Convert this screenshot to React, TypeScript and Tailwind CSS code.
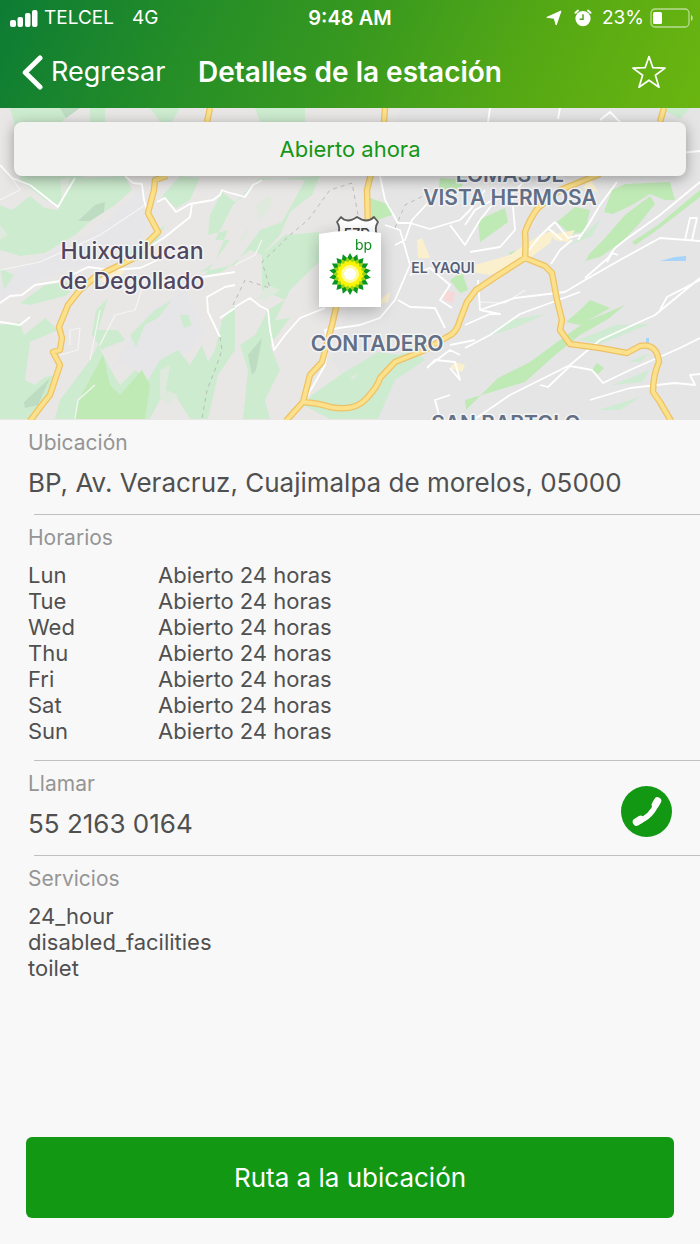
import { useState } from "react";

const HOURS = [
	{ day: "Lun", text: "Abierto 24 horas" },
	{ day: "Tue", text: "Abierto 24 horas" },
	{ day: "Wed", text: "Abierto 24 horas" },
	{ day: "Thu", text: "Abierto 24 horas" },
	{ day: "Fri", text: "Abierto 24 horas" },
	{ day: "Sat", text: "Abierto 24 horas" },
	{ day: "Sun", text: "Abierto 24 horas" },
];

const SERVICES = ["24_hour", "disabled_facilities", "toilet"];

export default function App() {
	return (
		<div className="flex min-h-screen flex-col bg-[#f8f8f8] font-['Inter','Liberation_Sans',sans-serif] text-[#505050]">
			<header className="bg-linear-[115deg,#0d7c34_0%,#258e27_28%,#38991f_50%,#56a914_75%,#6ab510_100%] text-white">
				<StatusBar />
				<NavBar />
			</header>

			<section className="relative flex h-[312px] flex-col items-center overflow-hidden px-3.5 pt-3.5">
				<StationMap />
				<p className="relative h-[54px] w-full rounded-lg bg-[#f2f2f1] text-center text-[22px] leading-[54px] text-[#159615] shadow-[0_3px_14px_rgba(0,0,0,0.35)]">
					Abierto ahora
				</p>
				<StationMarker />
			</section>

			<main>
				<section className="px-7 pt-[9px] pb-[15px]">
					<SectionTitle>Ubicación</SectionTitle>
					<p className="mt-2.5 text-[26px] leading-8">
						BP, Av. Veracruz, Cuajimalpa de morelos, 05000
					</p>
				</section>
				<Divider />

				<section className="px-7 pt-[9px] pb-4">
					<SectionTitle>Horarios</SectionTitle>
					<table className="mt-2.5 text-left text-[22px] leading-[26px]">
						<tbody>
							{HOURS.map((h) => (
								<tr key={h.day}>
									<th scope="row" className="w-[130px] p-0 font-normal">
										{h.day}
									</th>
									<td className="p-0">{h.text}</td>
								</tr>
							))}
						</tbody>
					</table>
				</section>
				<Divider />

				<section className="flex items-end justify-between px-7">
					<div className="pt-[9px] pb-[15px]">
						<SectionTitle>Llamar</SectionTitle>
						<p className="mt-2.5 text-[26px] leading-8">55 2163 0164</p>
					</div>
					<button
						type="button"
						aria-label="Llamar a la estación"
						className="mb-[18px] size-[51px] rounded-full bg-[#129812]"
					>
						<PhoneIcon />
					</button>
				</section>
				<Divider />

				<section className="px-7 pt-[9px] pb-4">
					<SectionTitle>Servicios</SectionTitle>
					<ul className="mt-2.5 text-[22px] leading-[26px]">
						{SERVICES.map((s) => (
							<li key={s}>{s}</li>
						))}
					</ul>
				</section>
			</main>

			<footer className="mt-auto px-[26px] pb-[26px]">
				<button
					type="button"
					className="h-[81px] w-full rounded-md bg-[#129812] text-[26px] text-white"
				>
					Ruta a la ubicación
				</button>
			</footer>
		</div>
	);
}

function SectionTitle({ children }: { children: React.ReactNode }) {
	return <h2 className="text-[21px] leading-7 text-[#959595]">{children}</h2>;
}

function Divider() {
	return <hr className="ml-[34px] border-[#c0c0c0]" />;
}

// ── Header ─────────────────────────────────────────────────────────────────

function StatusBar() {
	return (
		<div className="grid h-9 grid-cols-[1fr_auto_1fr] items-center px-2.5 text-[19px]">
			<div className="flex items-center gap-1.5">
				<svg width="28" height="18" viewBox="0 0 28 18" fill="#fff" aria-hidden="true">
					<rect x="0" y="11" width="6" height="7" rx="2" />
					<rect x="7.5" y="8" width="5.5" height="10" rx="2" />
					<rect x="15" y="4" width="5.5" height="14" rx="2" />
					<rect x="22" y="1" width="5.5" height="17" rx="2" />
				</svg>
				<span>TELCEL</span>
				<span className="ml-3">4G</span>
			</div>
			<span className="px-2 text-[20px] font-semibold">9:48 AM</span>
			<div className="flex items-center justify-end">
				<svg width="16" height="16" viewBox="0 0 16 16" fill="#fff" aria-hidden="true">
					<path d="M15 1 10.200 15 8.200 8.200.8 7.400Z" stroke="#fff" strokeLinejoin="round" />
				</svg>
				<svg
					width="18"
					height="18"
					viewBox="0 0 18 18"
					className="ml-3"
					fill="none"
					aria-hidden="true"
				>
					<circle cx="9" cy="9.6" r="7.6" fill="#fff" />
					<path d="M1.500 3.800 4 1.600M16.500 3.800 14 1.600" stroke="#fff" strokeWidth="2" strokeLinecap="round" />
					<path d="M9 5.2v5H5.6" stroke="#4fa51a" strokeWidth="1.5" />
				</svg>
				<span className="ml-2.5">23%</span>
				<svg
					width="44"
					height="20"
					viewBox="0 0 44 20"
					className="-mr-1 ml-1.5"
					fill="none"
					aria-hidden="true"
				>
					<rect x="1" y="1" width="38" height="18" rx="4" stroke="#fff" strokeOpacity=".55" strokeWidth="1.3" />
					<rect x="3" y="4" width="9" height="12" rx="1.5" fill="#fff" />
					<path d="M41 7c2.4 1 2.4 5 0 6Z" fill="#fff" fillOpacity=".6" />
				</svg>
			</div>
		</div>
	);
}

function NavBar() {
	const [favorite, setFavorite] = useState(false);

	return (
		<nav className="grid h-[72px] grid-cols-[1fr_auto_1fr] items-center px-[22px]">
			<a href="#estaciones" className="flex items-center gap-2 text-[27px]">
				<svg width="21" height="35" viewBox="0 0 21 35" fill="none" aria-hidden="true">
					<path
						d="M18 3 3.2 17.5 18 32"
						stroke="#fff"
						strokeWidth="5"
						strokeLinecap="round"
						strokeLinejoin="round"
					/>
				</svg>
				Regresar
			</a>
			<h1 className="text-[28px] font-semibold">Detalles de la estación</h1>
			<button
				type="button"
				aria-label="Favorito"
				aria-pressed={favorite}
				onClick={() => setFavorite(!favorite)}
				className="mr-3 justify-self-end"
			>
				<svg width="34" height="34" viewBox="0 0 34 34" aria-hidden="true">
					<path
						d="M17 1.5 20.9 12.7 33 13.1 23.4 20.3 27 32.2 17 25.2 7 32.2 10.6 20.3 1 13.1 13.1 12.7Z"
						fill={favorite ? "#fff" : "none"}
						stroke="#fff"
						strokeWidth="1.7"
						strokeLinejoin="round"
					/>
				</svg>
			</button>
		</nav>
	);
}

function PhoneIcon() {
	return (
		<svg viewBox="0 0 51 51" fill="none" strokeLinecap="round" aria-hidden="true">
			<path d="M16 36Q31 31 36 16" stroke="#fff" strokeWidth="5.500" />
			<path d="M15.500 36 19.500 33.500M36.500 15 34.500 18.500" stroke="#fff" strokeWidth="7.500" />
		</svg>
	);
}

// ── Map ────────────────────────────────────────────────────────────────────

// Three rings of petals, drawn from the outside in.
const PETAL_RINGS = [
	{ color: "#0a9420", outer: 21, inner: 13, turn: 0 },
	{ color: "#9bd616", outer: 17, inner: 10, turn: 10 },
	{ color: "#fdf304", outer: 14, inner: 8, turn: 0 },
];

const PETALS = Array.from({ length: 18 }, (_, i) => i * 20);

function StationMarker() {
	return (
		<svg
			width="62"
			height="76"
			viewBox="0 0 62 76"
			className="relative mt-[55px] overflow-visible drop-shadow-[0_4px_8px_rgba(0,0,0,0.25)]"
			role="img"
			aria-label="bp"
		>
			<path d="M0 3Q30-3 62 2V76H0Z" fill="#fff" />
			<text x="36" y="19" fontSize="14" fill="#0a8a1c">
				bp
			</text>
			<g transform="translate(31 43)">
				{PETAL_RINGS.map((ring) => (
					<g key={ring.color} fill={ring.color}>
						{PETALS.map((angle) => (
							<path
								key={angle}
								d={`M0 0 -3.400 ${-ring.inner - 2} 0 ${-ring.outer} 3.400 ${-ring.inner - 2}Z`}
								transform={`rotate(${angle + ring.turn})`}
							/>
						))}
					</g>
				))}
				<circle r="9" fill="#fffb9a" />
				<circle r="6" fill="#fff" />
			</g>
		</svg>
	);
}

const WOODS = [
	"M10 108H75L62 122 90 122 85 176 72 181 62 206 45 200 20 180 14 122Z",
	"M0 205 12 210 30 196 45 208 58 210 63 198 75 178 125 176 132 190 115 205 92 220 75 235 45 253 20 256 0 250Z",
	"M150 108H180L172 122H160ZM180 176 200 178 190 200 176 208 162 196Z",
	"M235 202 222 192 210 215 208 235 228 230 215 262 200 272 235 265 260 230 282 222 305 180 260 178Z",
	"M233 205 260 180 320 176 312 195 290 212 280 235 262 255 250 250 222 272 205 275 230 240 215 240Z",
	"M262 255 285 235 319 232 319 262 290 290 275 320 290 318 270 345 280 370 265 400 270 419H243L248 370 240 345 255 335 268 310 285 300 262 290Z",
	"M0 268 14 275 4 290ZM20 303 45 285 85 280 65 296 30 305Z",
	"M0 325 20 322 24 335 45 318 58 330 30 342 25 380 35 385 45 377 55 375 42 405 30 419H0Z",
	"M125 255 165 225 158 240 145 250ZM96 310 108 298 98 330 118 330 125 340 105 348 102 350 92 335Z",
	"M60 400 90 360 98 345 112 372 120 385 135 370 148 380 160 360 178 350 190 365 202 345 208 362 215 350 222 320 235 305V350L218 375 208 419H190L175 395 160 400 150 419H55Z",
	"M130 335 155 310 172 300 158 318 145 325 136 347ZM180 315 188 315 192 325 184 328Z",
	"M312 395 340 375 378 352 400 355 410 345 425 360 395 380 378 419H330L303 405Z",
	"M90 108H105V122H90ZM255 108H305V122H260ZM660 108H690L680 119Z",
];

const CLEARINGS = [
	"M60 180 70 176 68 190 62 198ZM255 205 270 195 272 205 260 222ZM0 225 8 235 0 240Z",
	"M160 370 170 365 166 390 178 395 170 405 160 398ZM95 378 104 368 108 390 98 385Z",
	"M255 300 268 285 280 290 266 300ZM238 242 250 225 245 240ZM350 378 358 372 354 380Z",
];

const PARKS = [
	"M103 355 110 385 120 395 142 370 150 385 145 419H75L80 398Z",
	"M370 198 390 205 392 215 372 222ZM438 195 440 178 465 180 460 190Z",
	"M478 220 505 208 508 222 490 235 480 242Z",
	"M557 222 575 207 590 210 585 232 570 234Z",
	"M604 212 612 190 625 184 670 182 675 200 665 200 650 194 632 205 613 214Z",
	"M580 270 590 253 605 238 625 215 650 196 655 204 638 225 622 242 600 257 585 261Z",
	"M632 242 658 225 700 190V197L665 224 650 235 635 245Z",
	"M466 410 498 378 530 362 560 340 585 322 625 305 608 319 580 335 555 355 525 382 465 400Z",
	"M566 322 580 310 590 300 610 308 580 325ZM592 370 597 363 604 368 598 374Z",
	"M450 280 462 272 468 290 460 293ZM508 253 522 249 520 260Z",
];

const MOSSES = [
	"M486 336 510 320 545 314 515 328ZM578 340 615 325 650 324 620 336 600 344Z",
	"M612 385 650 370 642 382ZM598 410 640 397 620 410ZM628 362 650 353 640 362Z",
	"M570 245 600 220 592 236Z",
];

const HILLS = [
	"M78 221 95 205 105 202 104 212 90 221ZM24 402 50 378 38 405 25 408Z",
	"M60 108H80L66 118ZM248 355 262 338 256 370 252 375Z",
];

const SUBURBS = [
	"M0 278 58 248 90 235 140 190 150 215 140 240 120 260 60 270 0 300Z",
	"M110 370 150 310 185 290 205 330 190 350 150 380 125 362Z",
];

const SAND = [
	"M475 265 510 255 540 235 555 230 550 243 530 258 490 275 472 272Z",
	"M417 240 422 238 430 258 418 258ZM100 272 125 270 118 280 102 282ZM550 235 575 230 568 242 555 240Z",
	"M380 300 390 292 388 302 380 304ZM455 362 465 365 462 372 450 368ZM583 188 590 178 598 192Z",
];

const STREETS = [
	"M0 165 12 178 30 185 58 207 63 198 75 178",
	"M125 176 133 183 142 184 144 200 148 213",
	"M157 202 165 198 176 212 190 204 213 200 220 195 222 190 227 192 245 197 253 185 262 180",
	"M192 204 190 217 165 237 140 253",
	"M0 303 10 296 22 295 35 285 60 281 88 267 110 270 140 268 162 258",
	"M235 272 203 277M235 285 225 287 207 297 208 312 220 337M220 318 235 308",
	"M0 322 20 325 30 317",
	"M235 307 250 298 260 306 268 310 270 330 274 350 285 335 300 318 325 308",
	"M305 400 325 365 328 345 325 330 360 325 380 318 395 300 410 265 400 230 385 225",
	"M380 176 385 200 398 223 410 223 430 229 460 220 470 210 485 190",
	"M395 245 405 240 412 220 440 190M450 225 465 245 480 220 500 195",
	"M398 300 410 307 435 308 445 328M410 275 430 268 450 285 440 300 452 308",
	"M470 252 500 247 515 230 512 195 525 180M465 225 475 210 510 190",
	"M555 222 540 236 525 255M555 222 568 238 580 235M578 240 590 222 600 205 617 182",
	"M551 264 560 250 572 240M555 222 548 228 562 240",
	"M478 280 480 310 500 314 490 314 465 325M480 310 515 298 565 292 585 280 620 260 660 238 700 241",
	"M585 278 608 258 615 248 625 240 660 215 700 182",
	"M465 348 490 335 520 314 580 292",
	"M475 419 510 395 530 385 570 365 600 340 655 315 700 278",
	"M540 385 548 387 570 366 592 370 603 383 630 370 680 348 700 338",
	"M590 400 630 388 675 383 695 385 690 375 700 374",
	"M685 240 690 218 697 218 692 240M660 310 667 297 700 280M607 262 612 253 618 255",
	"M427 368 435 360 455 362 460 380 450 368M440 419 435 400 450 395M560 108 558 119M600 120 610 112 620 122",
	"M680 153 700 151M450 345 475 340M490 108 488 122M460 355 450 350 430 365",
];

const LANES = [
	"M0 200 20 190 10 175M0 270 40 262 100 235 145 205",
	"M70 345 70 330 80 328 78 350 60 355M100 345 115 315 135 310 145 280",
	"M75 419 78 400 95 385M90 360 100 310M235 265 255 255 262 240M480 302 505 303 525 290",
];

const HIGHWAYS = [
	"M210 108 207 122M385 108 384 122M664 108 660 122",
	"M167 176 155 180 154 190 148 213 158 232 150 240 138 256 120 265 95 277 80 290 68 305 59 327 62 338 60 350 53 352 60 365 55 380 50 395 42 405 30 421",
	"M371 174 367 190 368 230 340 290 332 325 322 362 310 375 303 402 286 421",
	"M303 402Q318 403 330 407 355 412 367 398 378 386 380 378L395 362 425 350 447 337Q457 333 460 320L467 302 476 290 500 274 525 258Q526 245 525 232 530 218 538 208L560 190 600 174",
	"M525 258 545 266 552 273 557 300 562 320 560 330 570 344 600 348 627 353 640 346Q657 343 659 362 653 375 653 392L660 402 671 421",
];

function StationMap() {
	return (
		<svg
			viewBox="0 108 700 312"
			preserveAspectRatio="xMidYMid slice"
			className="absolute inset-0 size-full"
			fill="none"
			strokeLinejoin="round"
			aria-hidden="true"
		>
			<path d="M0 108H700V420H0Z" fill="#e9e7e6" />
			<path d="M400 108H700V420H380L330 360 370 240Z" fill="#e5e5e6" />
			<path d={SUBURBS.join("")} fill="#e6e6e9" />
			<path d={WOODS.join("")} fill="#cdebcf" />
			<path d={CLEARINGS.join("")} fill="#e0e9de" />
			<path d={PARKS.join("")} fill="#bfe9b5" />
			<path d={MOSSES.join("")} fill="#cfebd2" />
			<path d={HILLS.join("")} fill="#bddcc1" />
			<path d={SAND.join("")} fill="#fbf0cd" />
			<path d="M445 290 455 293 453 303 444 300Z" fill="#f8d7d7" />
			<path d="M660 261 675 257 686 256V261ZM646 338H649V343H646Z" fill="#a7d4fa" />
			<path d={LANES.join("")} stroke="#f6f5f3" strokeWidth="1.2" />
			<path d={STREETS.join("")} stroke="#fff" strokeWidth="1.8" />
			<path
				d="M220 337 222 350 215 370 207 390 202 419M233 305 245 280 270 288 262 262 290 235 308 220 330 190 352 183 358 215M395 228 405 205 435 190"
				stroke="#b9bdb9"
				strokeDasharray="4 4"
			/>
			<path d={HIGHWAYS.join("")} stroke="#eec264" strokeWidth="6.5" />
			<path d={HIGHWAYS.join("")} stroke="#fbe18b" strokeWidth="4" />

			{/* Highway shield */}
			<path
				d="M341 217Q347 224 357 217 367 224 374 217L378 222Q374 228 377 235V244H338V235Q341 228 337 222Z"
				fill="#fff"
				stroke="#5c5c5c"
				strokeWidth="1.8"
			/>
			<text x="357" y="239" fontSize="14" fontWeight="600" fill="#444" textAnchor="middle">
				57D
			</text>

			<g
				textAnchor="middle"
				fill="#626f86"
				stroke="#f4f4f4"
				strokeWidth="3"
				paintOrder="stroke"
				fontWeight="600"
				fontSize="21"
			>
				<text x="510" y="182">LOMAS DE</text>
				<text x="510" y="205">VISTA HERMOSA</text>
				<text x="377" y="351">CONTADERO</text>
				<text x="506" y="431">SAN BARTOLO</text>
				<text x="443" y="273" fontSize="14" fill="#565f78">EL YAQUI</text>
				<g fill="#51465f" fontSize="23" fontWeight="500">
					<text x="132" y="259">Huixquilucan</text>
					<text x="132" y="289">de Degollado</text>
				</g>
			</g>
		</svg>
	);
}
